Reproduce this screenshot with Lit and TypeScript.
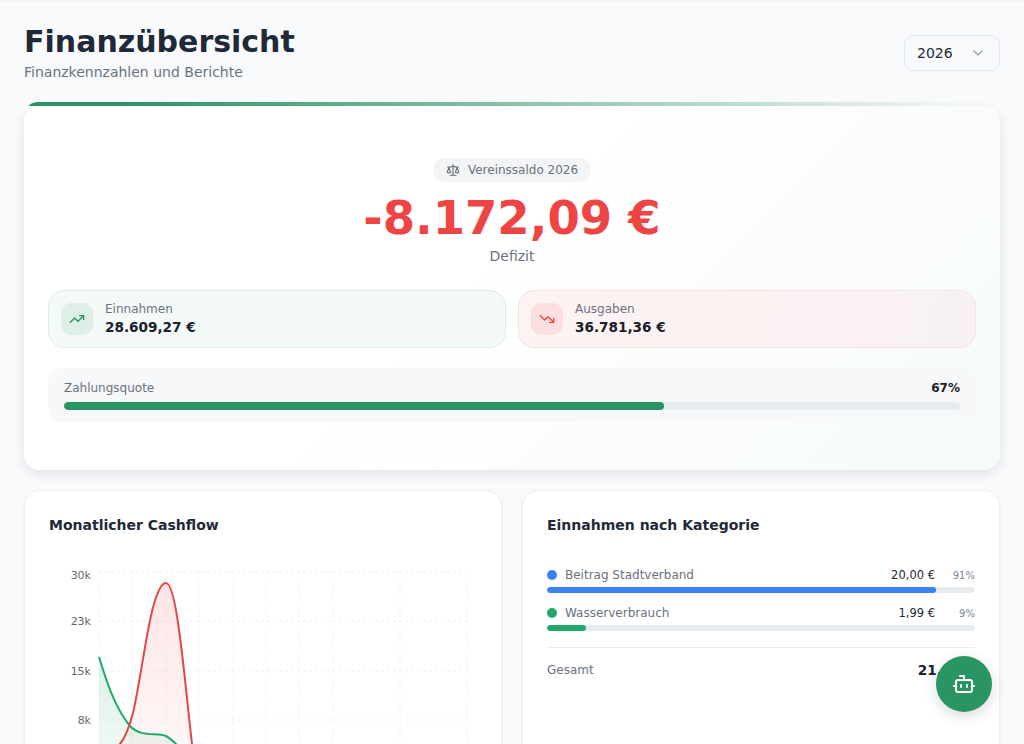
import { css, html, LitElement, svg } from "lit";
import { customElement } from "lit/decorators.js";

const categories = [
  { name: "Beitrag Stadtverband", amount: "20,00 €", pct: 91, color: "#3b82f6" },
  { name: "Wasserverbrauch", amount: "1,99 €", pct: 9, color: "#22a86b" },
];

// chart coordinates are relative to the card's svg, which starts at x=49 y=560
const gridX = [50, 83, 117, 150, 184, 217, 250, 284, 351, 418];
const gridY = [12, 61, 111, 160, 209];
const ticks = [
  { y: 19, label: "30k" },
  { y: 65, label: "23k" },
  { y: 115, label: "15k" },
  { y: 164, label: "8k" },
];

const greenLine = "M50 97C60 130 68 150 81 166C92 178 108 172 117 176C128 182 136 195 150 209L184 240";
const redLine = "M50 209L71 184C76 178 80 168 84 153C92 118 98 66 105 44C109 30 113 23 117 23C122 23 126 40 130 70C135 105 139 150 143 184C145 200 147 215 150 240";

@customElement("app-root")
export class AppRoot extends LitElement {
  static styles = css`
    :host {
      display: block;
      height: 744px;
      overflow: hidden;
      background: #f8fafc;
      border-top: 2px solid #f1f3f5;
      box-sizing: border-box;
      font-family: "DejaVu Sans", sans-serif;
      color: #1f2937;
    }

    .page {
      padding: 24px 24px 0;
    }

    .header {
      display: flex;
      justify-content: space-between;
      align-items: flex-start;
      margin-bottom: 25px;
    }

    h1 {
      margin: 0;
      padding-top: 1px;
      font-size: 30px;
      line-height: 30px;
      font-weight: 700;
      color: #1f2937;
    }

    .subtitle {
      margin-top: 7px;
      font-size: 14px;
      line-height: 17px;
      color: #6b7280;
    }

    .year {
      width: 96px;
      height: 36px;
      margin-top: 9px;
      box-sizing: border-box;
      display: flex;
      align-items: center;
      justify-content: space-between;
      padding: 0 13px 0 12px;
      border: 1px solid #e2e8f0;
      border-radius: 10px;
      font-size: 14px;
      color: #1f2937;
    }

    .year svg {
      color: #9ca3af;
    }

    .hero {
      position: relative;
      background: linear-gradient(135deg, #ffffff 0%, #ffffff 45%, #f5faf8 100%);
      border-radius: 16px;
      padding: 52px 24px 48px;
      box-shadow: 0 4px 12px rgba(15, 23, 42, 0.1);
      margin-bottom: 20px;
    }

    .hero::before {
      content: "";
      position: absolute;
      left: 0;
      right: 0;
      top: -4px;
      height: 20px;
      border-radius: 14px 14px 0 0;
      background: linear-gradient(90deg, #2a9463 0%, #2a9463 10%, rgba(42, 148, 99, 0) 96%);
      clip-path: inset(0 0 16px 0);
    }

    .balance {
      display: flex;
      flex-direction: column;
      align-items: center;
    }

    .pill {
      display: flex;
      align-items: center;
      gap: 8px;
      height: 24px;
      padding: 0 13px;
      border-radius: 12px;
      background: #f3f4f6;
      font-size: 12px;
      color: #6b7280;
    }

    .amount {
      margin-top: 8px;
      font-size: 46.5px;
      line-height: 56px;
      font-weight: 700;
      color: #ef4444;
    }

    .state {
      margin-top: 2px;
      font-size: 14px;
      line-height: 17px;
      color: #6b7280;
    }

    .stats {
      display: grid;
      grid-template-columns: 1fr 1fr;
      gap: 12px;
      margin-top: 25px;
    }

    .stat {
      display: flex;
      align-items: center;
      gap: 12px;
      height: 58px;
      box-sizing: border-box;
      padding: 0 12px;
      border-radius: 16px;
      border: 1px solid;
    }

    .stat.in {
      background: #f3faf7;
      border-color: #deefe8;
    }

    .stat.out {
      background: linear-gradient(100deg, #fef3f3, #f8f1f2);
      border-color: #f9e0e0;
    }

    .stat-icon {
      width: 32px;
      height: 32px;
      border-radius: 10px;
      display: flex;
      align-items: center;
      justify-content: center;
    }

    .in .stat-icon {
      background: #deefe8;
      color: #2a9463;
    }

    .out .stat-icon {
      background: #fbdfdf;
      color: #ef4444;
    }

    .stat-label {
      font-size: 12px;
      line-height: 17px;
      color: #6b7280;
    }

    .stat-value {
      font-size: 13.6px;
      line-height: 19px;
      font-weight: 700;
      color: #1a202c;
    }

    .quota {
      margin-top: 20px;
      padding: 13px 16px;
      height: 54px;
      box-sizing: border-box;
      border-radius: 14px;
      background: #f6f8f9;
    }

    .quota-head {
      display: flex;
      justify-content: space-between;
      font-size: 12px;
      line-height: 15px;
      color: #6b7280;
    }

    .quota-head b {
      color: #1a202c;
    }

    .quota-track {
      margin-top: 6px;
      height: 8px;
      border-radius: 4px;
      background: #e8ecef;
      overflow: hidden;
    }

    .quota-fill {
      height: 100%;
      border-radius: 4px;
      background: #2a9463;
    }

    .cols {
      display: grid;
      grid-template-columns: 1fr 1fr;
      gap: 20px;
    }

    .card {
      background: #fff;
      border: 1px solid #eef1f4;
      border-radius: 16px;
      padding: 24px;
      box-shadow: 0 1px 4px rgba(15, 23, 42, 0.05);
      min-height: 400px;
    }

    h2 {
      margin: 0;
      font-size: 14px;
      line-height: 20px;
      font-weight: 700;
      color: #1f2937;
    }

    .chart {
      display: block;
      margin-top: 25px;
    }

    .chart text {
      font-size: 11px;
      fill: #666;
    }

    .cat-list {
      margin-top: 31px;
    }

    .cat + .cat {
      margin-top: 11px;
    }

    .cat-head {
      display: flex;
      align-items: center;
      height: 18px;
      font-size: 12px;
      color: #6b7280;
    }

    .dot {
      width: 10px;
      height: 10px;
      border-radius: 50%;
      margin-right: 8px;
    }

    .cat-name {
      flex: 1;
    }

    .cat-amount {
      font-size: 11.5px;
      color: #1f2937;
    }

    .cat-pct {
      width: 40px;
      text-align: right;
      font-size: 10px;
      color: #7b8794;
    }

    .cat-track {
      margin-top: 3px;
      height: 6px;
      border-radius: 3px;
      background: #e9ecef;
      overflow: hidden;
    }

    .cat-fill {
      height: 100%;
      border-radius: 3px;
    }

    .total {
      display: flex;
      justify-content: space-between;
      align-items: center;
      margin-top: 16px;
      padding-top: 14px;
      border-top: 1px solid #e9ecef;
      font-size: 12px;
      color: #6b7280;
    }

    .total b {
      font-size: 13.6px;
      color: #1a202c;
    }

    .fab {
      position: fixed;
      right: 32px;
      bottom: 32px;
      width: 56px;
      height: 56px;
      border-radius: 50%;
      background: #2a9463;
      color: #fff;
      display: flex;
      align-items: center;
      justify-content: center;
      box-shadow: 0 4px 14px rgba(0, 0, 0, 0.15);
    }
  `;

  private icon(paths: unknown, size = 16) {
    return html`<svg width=${size} height=${size} viewBox="0 0 24 24" fill="none" stroke="currentColor" stroke-width="2" stroke-linecap="round" stroke-linejoin="round">${paths}</svg>`;
  }

  private renderChart() {
    return html`
      <svg class="chart" width="427" height="300" viewBox="0 0 427 300">
        <defs>
          <linearGradient id="gIn" x1="0" y1="0" x2="0" y2="1">
            <stop offset="0" stop-color="#22a86b" stop-opacity="0.16"></stop>
            <stop offset="1" stop-color="#22a86b" stop-opacity="0"></stop>
          </linearGradient>
          <linearGradient id="gOut" x1="0" y1="0" x2="0" y2="1">
            <stop offset="0" stop-color="#ef4444" stop-opacity="0.14"></stop>
            <stop offset="1" stop-color="#ef4444" stop-opacity="0"></stop>
          </linearGradient>
        </defs>
        <g stroke="#f0f1f3" stroke-dasharray="3 3" stroke-width="1">
          ${gridX.map((x) => svg`<line x1=${x} x2=${x} y1="12" y2="300"></line>`)}
          ${gridY.map((y) => svg`<line x1="50" x2="418" y1=${y} y2=${y}></line>`)}
        </g>
        ${ticks.map((t) => svg`<text x="42" y=${t.y} text-anchor="end">${t.label}</text>`)}
        <path d="${greenLine}L184 260L50 260Z" fill="url(#gIn)"></path>
        <path d="${redLine}L150 260L50 260Z" fill="url(#gOut)"></path>
        <path d=${greenLine} fill="none" stroke="#22a86b" stroke-width="2"></path>
        <path d=${redLine} fill="none" stroke="#e04848" stroke-width="2"></path>
      </svg>
    `;
  }

  render() {
    return html`
      <div class="page">
        <div class="header">
          <div>
            <h1>Finanzübersicht</h1>
            <div class="subtitle">Finanzkennzahlen und Berichte</div>
          </div>
          <div class="year">
            2026
            ${this.icon(svg`<path d="m6 9 6 6 6-6"></path>`)}
          </div>
        </div>

        <section class="hero">
          <div class="balance">
            <div class="pill">
              ${this.icon(svg`<path d="m16 16 3-8 3 8c-.87.65-1.92 1-3 1s-2.13-.35-3-1Z"></path><path d="m2 16 3-8 3 8c-.87.65-1.92 1-3 1s-2.13-.35-3-1Z"></path><path d="M7 21h10"></path><path d="M12 3v18"></path><path d="M3 7h2c2 0 5-1 7-2 2 1 5 2 7 2h2"></path>`, 14)}
              Vereinssaldo 2026
            </div>
            <div class="amount">-8.172,09 €</div>
            <div class="state">Defizit</div>
          </div>

          <div class="stats">
            <div class="stat in">
              <div class="stat-icon">
                ${this.icon(svg`<polyline points="22 7 13.5 15.5 8.5 10.5 2 17"></polyline><polyline points="16 7 22 7 22 13"></polyline>`)}
              </div>
              <div>
                <div class="stat-label">Einnahmen</div>
                <div class="stat-value">28.609,27 €</div>
              </div>
            </div>
            <div class="stat out">
              <div class="stat-icon">
                ${this.icon(svg`<polyline points="22 17 13.5 8.5 8.5 13.5 2 7"></polyline><polyline points="16 17 22 17 22 11"></polyline>`)}
              </div>
              <div>
                <div class="stat-label">Ausgaben</div>
                <div class="stat-value">36.781,36 €</div>
              </div>
            </div>
          </div>

          <div class="quota">
            <div class="quota-head"><span>Zahlungsquote</span><b>67%</b></div>
            <div class="quota-track"><div class="quota-fill" style="width: 67%"></div></div>
          </div>
        </section>

        <div class="cols">
          <section class="card">
            <h2>Monatlicher Cashflow</h2>
            ${this.renderChart()}
          </section>
          <section class="card">
            <h2>Einnahmen nach Kategorie</h2>
            <div class="cat-list">
              ${categories.map(
                (c) => html`
                  <div class="cat">
                    <div class="cat-head">
                      <span class="dot" style="background: ${c.color}"></span>
                      <span class="cat-name">${c.name}</span>
                      <span class="cat-amount">${c.amount}</span>
                      <span class="cat-pct">${c.pct}%</span>
                    </div>
                    <div class="cat-track">
                      <div class="cat-fill" style="width: ${c.pct}%; background: ${c.color}"></div>
                    </div>
                  </div>
                `
              )}
            </div>
            <div class="total"><span>Gesamt</span><b>21,99 €</b></div>
          </section>
        </div>
      </div>

      <div class="fab">
        ${this.icon(svg`<path d="M12 8V4H8"></path><rect width="16" height="12" x="4" y="8" rx="2"></rect><path d="M2 14h2"></path><path d="M20 14h2"></path><path d="M15 13v2"></path><path d="M9 13v2"></path>`, 24)}
      </div>
    `;
  }
}
